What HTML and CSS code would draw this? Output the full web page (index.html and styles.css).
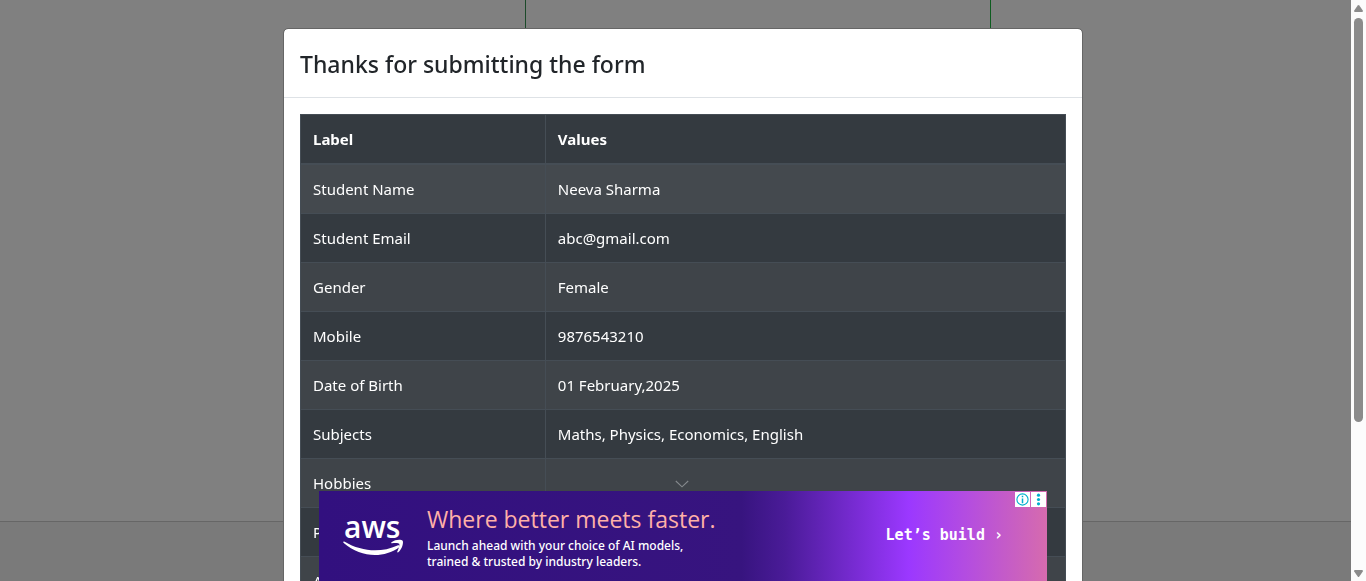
FILE: index.html
```html
<!DOCTYPE html>
<html lang="en">
<head>
<meta charset="utf-8">
<title>Practice Form</title>
<link rel="stylesheet" href="styles.css">
</head>
<body>
<div class="page">
  <div class="page-main">
    <div class="form-column"></div>
  </div>
  <footer class="page-footer"></footer>
</div>

<div class="modal-layer">
  <section class="modal" role="dialog" aria-labelledby="modal-title">
    <header class="modal-header">
      <h1 class="modal-title" id="modal-title">Thanks for submitting the form</h1>
    </header>
    <div class="modal-body">
      <table class="result-table">
        <thead>
          <tr><th class="label-column" scope="col">Label</th><th scope="col">Values</th></tr>
        </thead>
        <tbody>
          <tr class="active"><td>Student Name</td><td>Neeva Sharma</td></tr>
          <tr><td>Student Email</td><td>abc@gmail.com</td></tr>
          <tr><td>Gender</td><td>Female</td></tr>
          <tr><td>Mobile</td><td>9876543210</td></tr>
          <tr><td>Date of Birth</td><td>01 February,2025</td></tr>
          <tr><td>Subjects</td><td>Maths, Physics, Economics, English</td></tr>
          <tr><td>Hobbies</td><td></td></tr>
          <tr><td>Picture</td><td></td></tr>
          <tr><td>Address</td><td></td></tr>
        </tbody>
      </table>
    </div>
  </section>
</div>

<aside class="ad-anchor">
  <button class="ad-collapse" type="button" aria-label="Collapse">
    <svg width="14" height="8" viewBox="0 0 14 8" fill="none" stroke="#85898d" stroke-width="1.1"><path d="M.8 1 7 6.8 13.2 1"/></svg>
  </button>
  <div class="ad">
    <svg class="ad-logo" width="62" height="44" viewBox="0 0 62 44" fill="#fff">
      <text class="ad-logo-text" x="1" y="24">aws</text>
      <path d="M1.2 27.6C19 38.2 38.5 38.8 54.5 31.5c1.6-.7 2.8.8 1.4 1.9C41 44.3 17.5 43.8.7 29c-.9-.8-.4-1.8.5-1.4Z"/>
      <path d="M48.5 28.2c3.4-2.6 9.6-3.2 11.1-1.4 1.2 1.6-.4 8.5-4.3 11.4-.7.5-1.3.1-1-.6 1-2.4 2.7-6.7 1.9-7.9-.8-1.2-5-.8-7.2-.5-.8.1-1.1-.5-.5-1Z"/>
    </svg>
    <div class="ad-copy">
      <p class="ad-title">Where better meets faster.</p>
      <p class="ad-text">Launch ahead with your choice of AI models,<br>trained &amp; trusted by industry leaders.</p>
    </div>
    <a class="ad-action" href="#">Let’s build ›</a>
    <div class="ad-badges">
      <button class="ad-badge" type="button" aria-label="About this ad">
        <svg width="13" height="13" viewBox="0 0 13 13" fill="none" stroke="#00aecd"><circle cx="6.5" cy="6.5" r="5.6" stroke-width="1.1"/><path d="M6.5 5.4v4.8M6.5 2.8v1.5" stroke-width="1.5"/></svg>
      </button>
      <button class="ad-badge" type="button" aria-label="Ad options">
        <svg width="13" height="13" viewBox="0 0 13 13" fill="#00aecd"><circle cx="6.5" cy="2.2" r="1.6"/><circle cx="6.5" cy="6.5" r="1.6"/><circle cx="6.5" cy="10.8" r="1.6"/></svg>
      </button>
    </div>
  </div>
</aside>

<div class="scrollbar" aria-hidden="true">
  <svg width="9" height="7" viewBox="0 0 9 7" fill="#8b8b8b"><path d="M3.7.6Q4.5-.4 5.3.6L8.8 5.6Q9.2 7 8 7H1Q-.2 7 .2 5.6Z"/></svg>
  <div class="scroll-track"><div class="scroll-thumb"></div></div>
  <svg width="9" height="7" viewBox="0 0 9 7" fill="#8b8b8b"><path d="M3.7 6.4Q4.5 7.4 5.3 6.4L8.8 1.4Q9.2 0 8 0H1Q-.2 0 .2 1.4Z"/></svg>
</div>
</body>
</html>
```
FILE: styles.css
```css
* { box-sizing: border-box; }

body {
  margin: 0;
  height: 100vh;
  overflow: hidden;
  background: #808080;
  color: #212529;
  font: 15px/24px "Noto Sans", "Open Sans", sans-serif;
}

button { border: 0; padding: 0; background: none; cursor: pointer; }

.page {
  display: flex;
  flex-direction: column;
  height: 100vh;
}
.page-main {
  flex: 1;
  display: flex;
  justify-content: center;
  padding-left: 150px;
}
.form-column {
  width: 466px;
  border: solid #0d5c1f;
  border-width: 0 1px;
  border-left-color: #1c4a2a;
}
.page-footer {
  height: 60px;
  border-top: 1px solid #666;
  background: #7a7a7a;
}

.modal-layer {
  position: fixed;
  inset: 0;
  overflow: hidden;
  padding: 28px 16px;
}
.modal {
  max-width: 800px;
  margin: 0 auto;
  border: 1px solid #666;
  border-radius: 5px;
  background: #fff;
  background-clip: padding-box;
}
.modal-header {
  padding: 17px 16px 15px;
  border-bottom: 1px solid #dee2e6;
}
.modal-title {
  margin: 0;
  font-size: 23px;
  font-weight: 500;
  line-height: 36px;
}
.modal-body { padding: 16px; }

.result-table {
  width: 100%;
  border-collapse: collapse;
  background: #343a40;
  color: #fff;
}
.result-table th,
.result-table td {
  height: 49px;
  padding: 12px;
  border: 1px solid #454d55;
  text-align: left;
}
.result-table th { border-bottom-width: 2px; }
.label-column { width: 32%; }
.result-table tbody tr:nth-child(odd) { background: #3f4449; }
.result-table tbody tr.active { background: #44494e; }

.ad-anchor {
  position: fixed;
  inset: auto 0 0;
  display: flex;
  flex-direction: column;
  align-items: center;
}
.ad-collapse {
  display: flex;
  padding: 0 3px 3px 0;
}
.ad {
  position: relative;
  display: flex;
  align-items: center;
  width: 728px;
  height: 90px;
  padding: 0 44px 0 24px;
  background: linear-gradient(90deg, #32107f 0%, #37147f 58%, #4a1b98 64%, #9b38ff 81%, #b44de0 89%, #d66bae 100%);
  color: #fff;
}
.ad-logo { flex: none; }
.ad-logo-text { font: 600 30px "Open Sans", sans-serif; }
.ad-copy { flex: 1; padding-left: 22px; white-space: nowrap; }
.ad-title {
  margin: 0;
  color: #ffb0a8;
  font: 400 23px/32px "Open Sans", sans-serif;
}
.ad-text {
  margin: 3px 0 0;
  font-size: 12px;
  font-weight: 500;
  line-height: 16px;
}
.ad-action {
  padding-bottom: 3px;
  color: #fff;
  font: 700 15px/20px "DejaVu Sans Mono", monospace;
  text-decoration: none;
  white-space: nowrap;
}
.ad-badges {
  position: absolute;
  top: 1px;
  right: 1px;
  display: flex;
  gap: 1px;
}
.ad-badge {
  display: grid;
  place-items: center;
  width: 15px;
  height: 15px;
  background: #fff;
}

.scrollbar {
  position: fixed;
  inset: 0 0 0 auto;
  display: flex;
  flex-direction: column;
  align-items: center;
  gap: 6px;
  width: 15px;
  padding: 5px 0 4px;
  background: #fcfcfc;
}
.scroll-track { flex: 1; }
.scroll-thumb {
  width: 9px;
  height: 74%;
  border-radius: 5px;
  background: #8b8b8b;
}
```
